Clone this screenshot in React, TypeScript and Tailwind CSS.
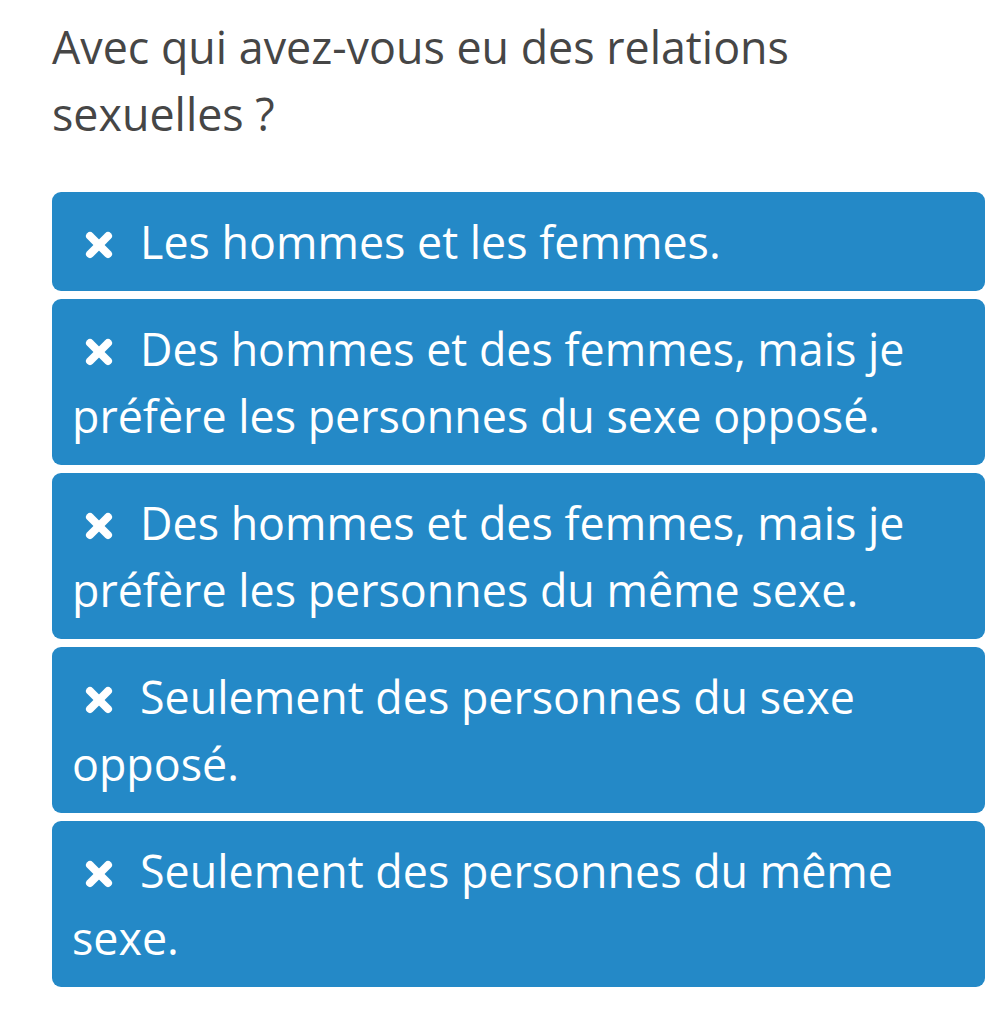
import React from "react"

const options = [
  "Les hommes et les femmes.",
  "Des hommes et des femmes, mais je préfère les personnes du sexe opposé.",
  "Des hommes et des femmes, mais je préfère les personnes du même sexe.",
  "Seulement des personnes du sexe opposé.",
  "Seulement des personnes du même sexe.",
]

function CrossIcon() {
  return (
    <svg
      width="28"
      height="28"
      viewBox="0 0 28 28"
      className="inline-block align-baseline"
      aria-hidden="true"
    >
      <g stroke="white" strokeWidth="8" strokeLinecap="round">
        <line x1="5" y1="5" x2="23" y2="23" />
        <line x1="23" y1="5" x2="5" y2="23" />
      </g>
    </svg>
  )
}

export default function App() {
  return (
    <div
      className="min-h-screen bg-white pt-[13px] pl-[52px]"
      style={{ fontFamily: '"Open Sans", sans-serif' }}
    >
      <h1 className="w-[800px] text-[44.8px] leading-[67px] font-normal text-[#464646]">
        Avec qui avez-vous eu des relations sexuelles ?
      </h1>

      <div className="mt-[45px] flex w-[933px] flex-col gap-[8px]">
        {options.map((label) => (
          <button
            key={label}
            type="button"
            className="rounded-[9px] bg-[#2489c7] py-[16px] pl-[20px] pr-[24px] text-left text-[44.8px] leading-[67px] text-white"
          >
            <span className="ml-[13px] mr-[27px] inline-block">
              <CrossIcon />
            </span>
            {label}
          </button>
        ))}
      </div>
    </div>
  )
}
